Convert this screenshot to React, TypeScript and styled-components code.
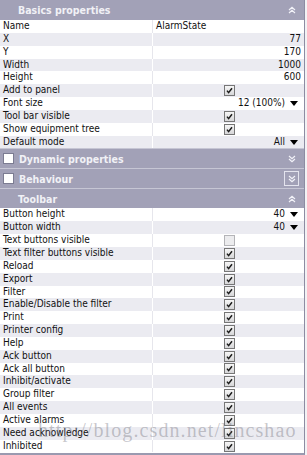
import styled, { createGlobalStyle } from "styled-components";

const GlobalStyle = createGlobalStyle`
  body {
    margin: 0;
    background: #f2f2f4;
    font-family: "DejaVu Sans Condensed", "Liberation Sans", sans-serif;
  }
`;

const Panel = styled.div`
  position: relative;
  width: 304px;
  height: 453px;
  background: #ffffff;
  border-right: 1px solid #8c8ca2;
  border-bottom: 2px solid #9a9ab0;
  overflow: hidden;
`;

const Header = styled.div<{ $first?: boolean }>`
  height: ${(p) => (p.$first ? "20px" : "19px")};
  border-top: ${(p) => (p.$first ? "none" : "1px solid #c6c6d4")};
  background: #a2a1b7;
  display: flex;
  align-items: center;
  padding: 0 6px 0 3px;
  color: #f1f1f6;
  font-weight: bold;
  font-size: 10.5px;
`;

const HeaderBox = styled.span`
  width: 9px;
  height: 9px;
  background: #ffffff;
  border: 1px solid #7c7c92;
  margin-right: 5px;
  flex: none;
`;

const HeaderTitle = styled.span<{ $indent?: boolean }>`
  flex: 1;
  padding-left: ${(p) => (p.$indent ? "15px" : "0")};
`;

const ChevronWrap = styled.span<{ $boxed?: boolean }>`
  width: 13px;
  height: 13px;
  display: flex;
  align-items: center;
  justify-content: center;
  border: 1px solid ${(p) => (p.$boxed ? "#e4e4ee" : "transparent")};
  margin-right: -1px;
`;

const Row = styled.div<{ $alt: boolean }>`
  height: 12.85px;
  display: grid;
  grid-template-columns: 152px 1fr;
  background: ${(p) => (p.$alt ? "#ebebf1" : "#ffffff")};
  font-size: 10px;
  color: #111111;
  line-height: 12.85px;
`;

const Label = styled.div`
  padding-left: 3px;
  white-space: nowrap;
  overflow: hidden;
`;

const Value = styled.div<{ $alt: boolean; $center?: boolean }>`
  border-left: 1px solid ${(p) => (p.$alt ? "#ffffff" : "#e6e6ec")};
  display: flex;
  align-items: center;
  justify-content: ${(p) => (p.$center ? "center" : "flex-end")};
  padding-right: ${(p) => (p.$center ? "0" : "3px")};
`;

const Arrow = styled.span`
  width: 0;
  height: 0;
  border-left: 4px solid transparent;
  border-right: 4px solid transparent;
  border-top: 5px solid #000000;
  margin-left: 5px;
  margin-right: 3px;
`;

const Check = styled.span<{ $on: boolean }>`
  width: 9px;
  height: 9px;
  border: 1px solid ${(p) => (p.$on ? "#767676" : "#b4b4b8")};
  background: ${(p) =>
    p.$on ? "linear-gradient(#f6f6f6, #d6d6d8)" : "#ececee"};
  display: flex;
  align-items: center;
  justify-content: center;
  margin-left: 1px;
`;

const Watermark = styled.div`
  position: absolute;
  left: 38px;
  top: 419px;
  font-family: "Liberation Serif", serif;
  font-size: 20px;
  letter-spacing: 1.1px;
  color: rgba(110, 110, 120, 0.38);
  white-space: nowrap;
  pointer-events: none;
`;

type Prop =
  | { label: string; kind: "text"; value: string }
  | { label: string; kind: "num"; value: string }
  | { label: string; kind: "select"; value: string }
  | { label: string; kind: "check"; value: boolean };

const basics: Prop[] = [
  { label: "Name", kind: "text", value: "AlarmState" },
  { label: "X", kind: "num", value: "77" },
  { label: "Y", kind: "num", value: "170" },
  { label: "Width", kind: "num", value: "1000" },
  { label: "Height", kind: "num", value: "600" },
  { label: "Add to panel", kind: "check", value: true },
  { label: "Font size", kind: "select", value: "12 (100%)" },
  { label: "Tool bar visible", kind: "check", value: true },
  { label: "Show equipment tree", kind: "check", value: true },
  { label: "Default mode", kind: "select", value: "All" },
];

const checks = [
  "Reload",
  "Export",
  "Filter",
  "Enable/Disable the filter",
  "Print",
  "Printer config",
  "Help",
  "Ack button",
  "Ack all button",
  "Inhibit/activate",
  "Group filter",
  "All events",
  "Active alarms",
  "Need acknowledge",
  "Inhibited",
];

const toolbar: Prop[] = [
  { label: "Button height", kind: "select", value: "40" },
  { label: "Button width", kind: "select", value: "40" },
  { label: "Text buttons visible", kind: "check", value: false },
  { label: "Text filter buttons visible", kind: "check", value: true },
  ...checks.map((label): Prop => ({ label, kind: "check", value: true })),
];

const Chevron = ({ up }: { up?: boolean }) => (
  <svg width="8" height="8" viewBox="0 0 8 8">
    <path
      d={up ? "M1 4 L4 1.2 L7 4 M1 7 L4 4.2 L7 7" : "M1 1 L4 3.8 L7 1 M1 4 L4 6.8 L7 4"}
      fill="none"
      stroke="#f2f2f8"
      strokeWidth="1.2"
    />
  </svg>
);

const CheckBox = ({ on }: { on: boolean }) => (
  <Check $on={on}>
    {on && (
      <svg width="7" height="7" viewBox="0 0 7 7">
        <path d="M1 3.6 L2.6 5.6 L6 1.2" fill="none" stroke="#1a1a1a" strokeWidth="1.5" />
      </svg>
    )}
  </Check>
);

const PropRow = ({ prop, alt }: { prop: Prop; alt: boolean }) => (
  <Row $alt={alt}>
    <Label>{prop.label}</Label>
    {prop.kind === "check" ? (
      <Value $alt={alt} $center>
        <CheckBox on={prop.value} />
      </Value>
    ) : prop.kind === "text" ? (
      <Value $alt={alt} style={{ justifyContent: "flex-start", paddingLeft: 3 }}>
        {prop.value}
      </Value>
    ) : (
      <Value $alt={alt}>
        {prop.value}
        {prop.kind === "select" && <Arrow />}
      </Value>
    )}
  </Row>
);

export default function App() {
  return (
    <>
      <GlobalStyle />
      <Panel>
        <Header $first>
          <HeaderTitle $indent>Basics properties</HeaderTitle>
          <ChevronWrap>
            <Chevron up />
          </ChevronWrap>
        </Header>
        {basics.map((p, i) => (
          <PropRow key={p.label} prop={p} alt={i % 2 === 1} />
        ))}
        <Header>
          <HeaderBox />
          <HeaderTitle>Dynamic properties</HeaderTitle>
          <ChevronWrap>
            <Chevron />
          </ChevronWrap>
        </Header>
        <Header>
          <HeaderBox />
          <HeaderTitle>Behaviour</HeaderTitle>
          <ChevronWrap $boxed>
            <Chevron />
          </ChevronWrap>
        </Header>
        <Header>
          <HeaderTitle $indent>Toolbar</HeaderTitle>
          <ChevronWrap>
            <Chevron up />
          </ChevronWrap>
        </Header>
        {toolbar.map((p, i) => (
          <PropRow key={p.label} prop={p} alt={i % 2 === 1} />
        ))}
        <Watermark>http://blog.csdn.net/lincshao</Watermark>
      </Panel>
    </>
  );
}
